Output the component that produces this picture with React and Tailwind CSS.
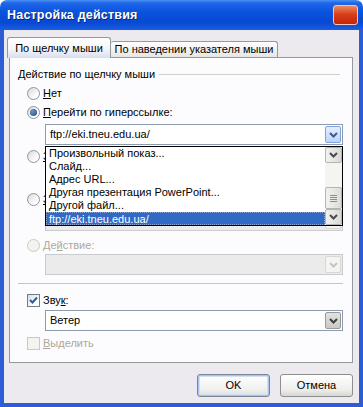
import React from 'react'

function Chevron({ down = true, color = '#4D6185' }) {
  return (
    <svg width="9" height="6" viewBox="0 0 9 6">
      <path
        d={down ? 'M1 1 L4.5 4.5 L8 1' : 'M1 5 L4.5 1.5 L8 5'}
        fill="none"
        stroke={color}
        strokeWidth="2"
      />
    </svg>
  )
}

function Radio({ checked, disabled }) {
  return (
    <span
      className={
        disabled
          ? 'w-[13px] h-[13px] shrink-0 rounded-full border border-[#CBCAC2] bg-[#F3F3F0] flex items-center justify-center'
          : 'w-[13px] h-[13px] shrink-0 rounded-full border border-[#8D96A3] bg-[linear-gradient(135deg,#D8D8D4,#FFFFFF_75%)] flex items-center justify-center'
      }
    >
      {checked && <span className="w-[7px] h-[7px] rounded-full bg-[radial-gradient(circle_at_35%_35%,#6C93C4,#1E4C80)]" />}
    </span>
  )
}

function Check({ checked, disabled }) {
  return (
    <span
      className={
        disabled
          ? 'w-[13px] h-[13px] shrink-0 border border-[#CBCAC2] bg-[#F3F3F0]'
          : 'w-[13px] h-[13px] shrink-0 border border-[#6F7C8E] bg-[linear-gradient(135deg,#DCDCD8,#FFFFFF_75%)] flex items-center justify-center'
      }
    >
      {checked && (
        <svg width="9" height="9" viewBox="0 0 9 9">
          <path d="M1 4 L3.5 6.5 L8 1.5" fill="none" stroke="#2D5BAE" strokeWidth="2" />
        </svg>
      )}
    </span>
  )
}

function Combo({ value, mode = 'normal', children }) {
  const box =
    mode === 'disabled'
      ? 'relative h-[21px] ml-[27px] border border-[#C9CBCE] bg-[#EBEBEB] flex items-center justify-between'
      : 'relative h-[21px] ml-[27px] border border-[#8C9BAE] bg-white flex items-center justify-between'
  const btn =
    mode === 'hover'
      ? 'w-[16px] h-[17px] mr-px rounded-[2px] border border-[#7FA3E0] bg-[linear-gradient(#E4EEFF,#BFD4FA)] flex items-center justify-center'
      : mode === 'disabled'
      ? 'w-[16px] h-[17px] mr-px rounded-[2px] border border-[#D7D7D4] bg-[#F4F4F2] flex items-center justify-center'
      : 'w-[16px] h-[17px] mr-px rounded-[2px] border border-[#9A9A9A] bg-[linear-gradient(#E2E2E0,#C9C9C6)] flex items-center justify-center'
  const arrow = mode === 'hover' ? '#3D5A8F' : mode === 'disabled' ? '#C5C5C2' : '#3F3F3F'
  return (
    <div className={box}>
      <span className="pl-[4px] text-[11px] leading-none">{value}</span>
      <span className={btn}>
        <Chevron color={arrow} />
      </span>
      {children}
    </div>
  )
}

const ITEMS = [
  'Произвольный показ...',
  'Слайд...',
  'Адрес URL...',
  'Другая презентация PowerPoint...',
  'Другой файл...',
  'ftp://eki.tneu.edu.ua/',
]

function ScrollBtn({ down }) {
  return (
    <span className="h-[16px] rounded-[2px] border border-[#B4B4B0] bg-[linear-gradient(90deg,#F2F2F0,#D9D9D5)] flex items-center justify-center">
      <Chevron down={down} color="#4A4A4A" />
    </span>
  )
}

export default function App() {
  return (
    <div className="w-[363px] h-[407px] flex flex-col rounded-t-[7px] overflow-hidden font-['Liberation_Sans',Arial,sans-serif] text-black">
      {/* title bar */}
      <div className="h-[30px] shrink-0 flex items-center justify-between pl-[7px] pr-[5px] bg-[linear-gradient(to_bottom,#4A92F5_0%,#1F66E8_10%,#0A53DE_40%,#0849D2_75%,#1A5EE3_100%)]">
        <span className="text-white font-bold text-[12.5px] tracking-[0.2px] [text-shadow:1px_1px_0_#0A2470]">
          Настройка действия
        </span>
        <span className="w-[25px] h-[20px] rounded-[3px] border border-[#F5C8B8] bg-[linear-gradient(#EE8A62,#D8401A_45%,#C42408)]" />
      </div>

      {/* body */}
      <div className="flex-1 flex flex-col bg-[#ECEAEE] border-l-[4px] border-r-[4px] border-b-[4px] border-[#2C5DD6] pl-[5px] pr-[6px] pt-[7px] pb-[6px] text-[11px]">
        {/* tabs */}
        <div className="h-[20px] flex items-end">
          <div className="relative z-10 -ml-[2px] -mb-px w-[104px] h-[21px] rounded-t-[3px] border border-b-0 border-[#919B9C] bg-[linear-gradient(#FFFFFF,#F6F6F9_55%,#D6DEEE)] flex items-center justify-center">
            По щелчку мыши
          </div>
          <div className="w-[167px] h-[16px] rounded-t-[3px] border border-b-0 border-l-0 border-[#919B9C] bg-[linear-gradient(#FFFFFF,#E6E6E4)] flex items-center justify-center">
            По наведении указателя мыши
          </div>
        </div>

        {/* panel */}
        <div className="w-[344px] h-[306px] border border-[#919B9C] bg-[#FCFCFE] flex flex-col pl-[8px] pr-[9px] pt-[10px]">
          <div className="h-[13px] flex items-center">
            <span>Действие по щелчку мыши</span>
            <span className="flex-1 ml-[4px] mr-[3px] h-px bg-[#D0D0C8]" />
          </div>

          <div className="mt-[6px] h-[13px] flex items-center gap-[3px] pl-[9px]">
            <Radio />
            <span><u>Н</u>ет</span>
          </div>

          <div className="mt-[6px] h-[13px] flex items-center gap-[3px] pl-[9px]">
            <Radio checked />
            <span><u>П</u>ерейти по гиперссылке:</span>
          </div>

          <div className="mt-[5px]">
            <Combo value="ftp://eki.tneu.edu.ua/" mode="hover">
              {/* open drop-down list, lies over the rows below */}
              <div className="absolute -left-px -right-px top-[21px] h-[80px] z-20 border border-black bg-white flex">
                <div className="flex-1 flex flex-col">
                  {ITEMS.map((t, i) =>
                    i === ITEMS.length - 1 ? (
                      <div key={t} className="h-[13px] leading-[12px] pl-[2px] bg-[#316AC5] text-white border border-dotted border-[#8FA6D8]">
                        {t}
                      </div>
                    ) : (
                      <div key={t} className="h-[13px] leading-[13px] pl-[3px]">
                        {t}
                      </div>
                    )
                  )}
                </div>
                <div className="w-[17px] flex flex-col bg-[#F5F4F1]">
                  <ScrollBtn />
                  <div className="flex-1 flex flex-col justify-end">
                    <span className="h-[22px] rounded-[2px] border border-[#B4B4B0] bg-[linear-gradient(90deg,#F2F2F0,#DCDCD8)] flex items-center justify-center">
                      <svg width="7" height="7" viewBox="0 0 7 7">
                        <path d="M0 0.5 H7 M0 2.5 H7 M0 4.5 H7 M0 6.5 H7" stroke="#8E8E8A" strokeWidth="1" />
                      </svg>
                    </span>
                  </div>
                  <ScrollBtn down />
                </div>
              </div>
            </Combo>
          </div>

          <div className="mt-[5px] h-[13px] flex items-center gap-[3px] pl-[9px]">
            <Radio />
            <span><u>З</u>апуск программы:</span>
          </div>

          <div className="mt-[4px] h-[21px] ml-[27px] border border-[#C9CBCE] bg-[#EBEBEB]" />

          <div className="mt-[5px] h-[13px] flex items-center gap-[3px] pl-[9px]">
            <Radio />
            <span><u>З</u>апуск макроса:</span>
          </div>

          <div className="mt-[4px]">
            <Combo value="" mode="disabled" />
          </div>

          <div className="mt-[8px] h-[13px] flex items-center gap-[3px] pl-[9px] text-[#ACA899]">
            <Radio disabled />
            <span>Де<u>й</u>ствие:</span>
          </div>

          <div className="mt-[2px]">
            <Combo value="" mode="disabled" />
          </div>

          <div className="mt-[8px] h-px bg-[#C5C5BE]" />

          <div className="mt-[10px] h-[13px] flex items-center gap-[3px] pl-[9px]">
            <Check checked />
            <span>Зву<u>к</u>:</span>
          </div>

          <div className="mt-[3px]">
            <Combo value="Ветер" mode="normal" />
          </div>

          <div className="mt-[6px] h-[13px] flex items-center gap-[3px] pl-[9px] text-[#ACA899]">
            <Check disabled />
            <span><u>В</u>ыделить</span>
          </div>
        </div>

        {/* buttons */}
        <div className="mt-[11px] flex justify-end gap-[10px]">
          <button className="w-[73px] h-[23px] rounded-[3px] border border-[#7D8691] bg-[linear-gradient(#FFFFFF,#F0F0EE_70%,#DCDCD8)] shadow-[inset_0_0_0_1px_#A7C2EE,inset_0_0_0_2px_#D3E1F8] text-[11px]">
            OK
          </button>
          <button className="w-[73px] h-[23px] rounded-[3px] border border-[#8E8E8E] bg-[linear-gradient(#FFFFFF,#EEEEEC_70%,#D6D6D2)] text-[11px]">
            Отмена
          </button>
        </div>
      </div>
    </div>
  )
}
